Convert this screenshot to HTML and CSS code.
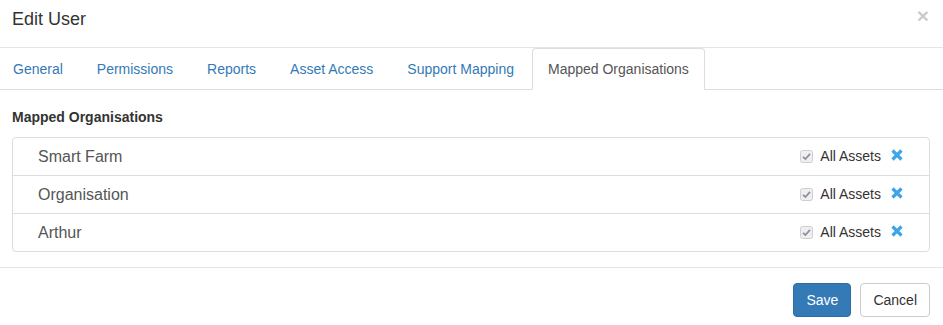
FILE: index.html
```html
<!DOCTYPE html>
<html lang="en">
<head>
<meta charset="utf-8">
<title>Edit User</title>
<link rel="stylesheet" href="styles.css">
</head>
<body>
<div class="modal">
  <div class="modal-header">
    <h4 class="modal-title">Edit User</h4>
    <button class="close" type="button">×</button>
  </div>
  <ul class="tabs">
    <li class="tab"><a href="#">General</a></li>
    <li class="tab"><a href="#">Permissions</a></li>
    <li class="tab"><a href="#">Reports</a></li>
    <li class="tab"><a href="#">Asset Access</a></li>
    <li class="tab"><a href="#">Support Mapping</a></li>
    <li class="tab active"><a href="#">Mapped Organisations</a></li>
  </ul>
  <div class="modal-body">
    <h5 class="section-title">Mapped Organisations</h5>
    <ul class="list">
      <li class="list-item">
        <span class="org-name">Smart Farm</span>
        <span class="item-actions">
          <svg class="check" width="13" height="13" viewBox="0 0 13 13"><rect x="0.5" y="0.5" width="12" height="12" rx="2" fill="#efefef" stroke="#cfcfcf"/><path d="M3 6.8 L5.4 9 L10 3.8" fill="none" stroke="#9b8aa3" stroke-width="1.8"/></svg>
          <span class="all-assets">All Assets</span>
          <svg class="remove" width="12" height="12" viewBox="0 0 12 12"><path d="M1.5 1.5 L10.5 10.5 M10.5 1.5 L1.5 10.5" stroke="#3da5e8" stroke-width="3.2"/></svg>
        </span>
      </li>
      <li class="list-item">
        <span class="org-name">Organisation</span>
        <span class="item-actions">
          <svg class="check" width="13" height="13" viewBox="0 0 13 13"><rect x="0.5" y="0.5" width="12" height="12" rx="2" fill="#efefef" stroke="#cfcfcf"/><path d="M3 6.8 L5.4 9 L10 3.8" fill="none" stroke="#9b8aa3" stroke-width="1.8"/></svg>
          <span class="all-assets">All Assets</span>
          <svg class="remove" width="12" height="12" viewBox="0 0 12 12"><path d="M1.5 1.5 L10.5 10.5 M10.5 1.5 L1.5 10.5" stroke="#3da5e8" stroke-width="3.2"/></svg>
        </span>
      </li>
      <li class="list-item">
        <span class="org-name">Arthur</span>
        <span class="item-actions">
          <svg class="check" width="13" height="13" viewBox="0 0 13 13"><rect x="0.5" y="0.5" width="12" height="12" rx="2" fill="#efefef" stroke="#cfcfcf"/><path d="M3 6.8 L5.4 9 L10 3.8" fill="none" stroke="#9b8aa3" stroke-width="1.8"/></svg>
          <span class="all-assets">All Assets</span>
          <svg class="remove" width="12" height="12" viewBox="0 0 12 12"><path d="M1.5 1.5 L10.5 10.5 M10.5 1.5 L1.5 10.5" stroke="#3da5e8" stroke-width="3.2"/></svg>
        </span>
      </li>
    </ul>
  </div>
  <div class="modal-footer">
    <button class="btn btn-primary" type="button">Save</button>
    <button class="btn btn-default" type="button">Cancel</button>
  </div>
</div>
</body>
</html>
```

FILE: styles.css
```css
* { box-sizing: border-box; }

html, body {
  margin: 0;
  padding: 0;
  background: #fff;
}

body {
  font-family: "Liberation Sans", Arial, sans-serif;
  font-size: 14px;
  line-height: 20px;
  color: #333;
  overflow: hidden;
}

.modal {
  width: 943px;
}

.modal-header {
  display: flex;
  justify-content: space-between;
  align-items: flex-start;
  padding: 6px 14px 15px 12px;
  border-bottom: 1px solid #e5e5e5;
}

.modal-title {
  margin: 0;
  font-size: 18px;
  line-height: 26px;
  font-weight: normal;
  color: #333;
}

.close {
  margin: -1px 0 0 0;
  padding: 0;
  border: 0;
  background: transparent;
  font-family: "Liberation Sans", Arial, sans-serif;
  font-size: 21px;
  font-weight: bold;
  line-height: 21px;
  color: #000;
  opacity: 0.2;
  cursor: pointer;
}

.tabs {
  display: flex;
  list-style: none;
  margin: 0 0 0 -3px;
  padding: 0;
  border-bottom: 1px solid #ddd;
}

.tab {
  margin-bottom: -1px;
  margin-right: 2px;
}

.tab a {
  display: block;
  padding: 10px 15px;
  line-height: 20px;
  border: 1px solid transparent;
  border-radius: 4px 4px 0 0;
  color: #337ab7;
  text-decoration: none;
}

.tab.active a {
  color: #555;
  background: #fff;
  border-color: #ddd #ddd transparent #ddd;
}

.modal-body {
  padding: 17px 13px 15px 12px;
}

.section-title {
  margin: 0 0 10px 0;
  font-size: 14px;
  line-height: 20px;
  font-weight: bold;
  color: #333;
}

.list {
  list-style: none;
  margin: 0;
  padding: 0;
}

.list-item {
  display: flex;
  justify-content: space-between;
  align-items: center;
  height: 39px;
  margin-bottom: -1px;
  padding: 0 26px 0 25px;
  border: 1px solid #ddd;
  background: #fff;
}

.list-item:first-child {
  border-radius: 4px 4px 0 0;
}

.list-item:last-child {
  margin-bottom: 0;
  border-radius: 0 0 4px 4px;
}

.org-name {
  font-size: 16px;
  line-height: 22px;
  color: #555;
}

.item-actions {
  display: flex;
  align-items: center;
  margin-top: -2px;
}

.check {
  display: block;
  margin-right: 7px;
  margin-top: 1px;
}

.all-assets {
  font-size: 14px;
  line-height: 20px;
  color: #333;
  margin-right: 10px;
}

.remove {
  display: block;
  margin-top: -1px;
}

.modal-footer {
  display: flex;
  justify-content: flex-end;
  gap: 9px;
  padding: 15px 13px 15px 12px;
  border-top: 1px solid #e5e5e5;
}

.btn {
  display: inline-block;
  margin: 0;
  padding: 6px 12px;
  font-family: "Liberation Sans", Arial, sans-serif;
  font-size: 14px;
  line-height: 20px;
  border: 1px solid transparent;
  border-radius: 4px;
  cursor: pointer;
}

.btn-primary {
  color: #fff;
  background: #337ab7;
  border-color: #2e6da4;
}

.btn-default {
  color: #333;
  background: #fff;
  border-color: #ccc;
}
```
